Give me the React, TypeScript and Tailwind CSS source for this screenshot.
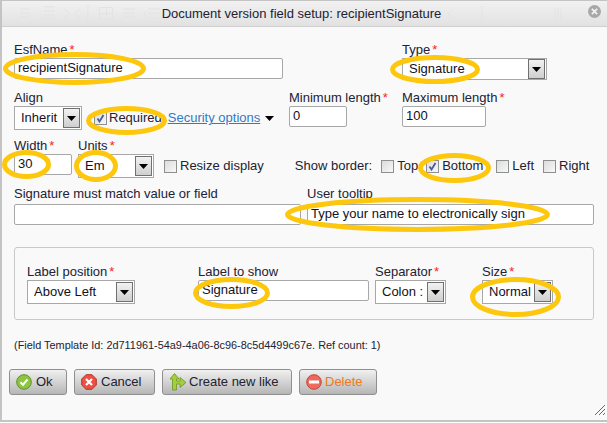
import React from "react";

const font = { fontFamily: '"Liberation Sans", Arial, sans-serif' };

function Star() {
  return <span className="text-[#ff2020] ml-[2px]">*</span>;
}

function Label({ children, req }: { children: React.ReactNode; req?: boolean }) {
  return (
    <div className="h-[14px] leading-[16px] text-[13px] text-[#222233] whitespace-nowrap">
      {children}
      {req && <Star />}
    </div>
  );
}

function Input({ w, value }: { w: number; value?: string }) {
  return (
    <div
      className="h-[21px] bg-white border border-[#a8a8a8] rounded-[2px] pl-[3px] text-[13px] leading-[18px] text-[#111122] whitespace-nowrap overflow-hidden"
      style={{ width: w }}
    >
      {value}
    </div>
  );
}

function Select({ w, value }: { w: number; value: string }) {
  return (
    <div
      className="h-[24px] bg-white border border-[#a8a8a8] flex items-center justify-between pl-[6px] pr-[1px] text-[13px] text-[#111122] whitespace-nowrap"
      style={{ width: w }}
    >
      <span>{value}</span>
      <span className="w-[17px] h-[20px] border border-[#707070] bg-gradient-to-b from-[#f2f2f2] to-[#cfcfcf] flex items-center justify-center">
        <svg width="9" height="5" viewBox="0 0 9 5">
          <path d="M0 0h9L4.500 5z" fill="#000" />
        </svg>
      </span>
    </div>
  );
}

function Check({ on }: { on?: boolean }) {
  return (
    <span className="w-[13px] h-[13px] border border-[#8e8f8f] bg-gradient-to-br from-[#dcdcdc] to-[#f8f8f8] flex items-center justify-center shrink-0">
      {on && (
        <svg width="9" height="9" viewBox="0 0 9 9">
          <path d="M1.500 4.500 3.500 7.500 7.500 1" stroke="#4a5a9a" strokeWidth="1.800" fill="none" />
        </svg>
      )}
    </span>
  );
}

function CheckLabel({ on, text, className }: { on?: boolean; text: string; className?: string }) {
  return (
    <span className={"flex items-center gap-[3px] text-[13px] text-[#222233] whitespace-nowrap " + (className ?? "")}>
      <Check on={on} />
      {text}
    </span>
  );
}

function Button({
  w,
  icon,
  text,
  className,
  gap = 4,
}: {
  w: number;
  icon: React.ReactNode;
  text: string;
  className?: string;
  gap?: number;
}) {
  return (
    <div
      className={
        "h-[26px] border border-[#8f8f8f] rounded-[3px] bg-gradient-to-b from-[#f1f1f1] to-[#b6b6b6] flex items-center pl-[6px] text-[13px] whitespace-nowrap " +
        (className ?? "text-[#222233]")
      }
      style={{ width: w, gap }}
    >
      {icon}
      {text}
    </div>
  );
}

const OkIcon = (
  <svg width="16" height="16" viewBox="0 0 16 16">
    <circle cx="8" cy="8" r="7.300" fill="#8cc63f" stroke="#5d8f2a" />
    <path d="M4.500 8.200 7 10.700 11.500 5.500" stroke="#fff" strokeWidth="2" fill="none" />
  </svg>
);
const CancelIcon = (
  <svg width="16" height="16" viewBox="0 0 16 16">
    <path d="M5 .7h6L15.300 5v6L11 15.300H5L.7 11V5z" fill="#ec4f43" stroke="#b5352c" />
    <path d="M5 5l6 6M11 5l-6 6" stroke="#fff" strokeWidth="2.200" />
  </svg>
);
const CreateIcon = (
  <svg width="18" height="18" viewBox="0 0 18 18">
    <path
      d="M5.500.5 10 6H7.500v2H11V4.500l6 5-6 5V11H7.500v6h-4V6H1z"
      fill="#a4cf3c"
      stroke="#6c9420"
      strokeWidth="0.800"
    />
  </svg>
);
const DeleteIcon = (
  <svg width="16" height="16" viewBox="0 0 16 16">
    <circle cx="8" cy="8" r="7.300" fill="#ee6a5c" stroke="#c0453a" />
    <rect x="3" y="6.500" width="10" height="3" fill="#fff" />
  </svg>
);

function Ring({ x0, x1, y0, y1 }: { x0: number; x1: number; y0: number; y1: number }) {
  return (
    <ellipse
      cx={(x0 + x1) / 2}
      cy={(y0 + y1) / 2}
      rx={(x1 - x0 - 5) / 2}
      ry={(y1 - y0 - 5) / 2}
      fill="none"
      stroke="#fdc70d"
      strokeWidth="5"
    />
  );
}

export default function App() {
  return (
    <div className="relative w-[607px] h-[423px] bg-white overflow-hidden" style={font}>
      <div className="h-[422px] border-l-2 border-t border-b-2 border-[#c4c4c4] bg-[#f9f9f9] flex flex-col">
        {/* title bar */}
        <div className="relative h-[26px] shrink-0 bg-gradient-to-b from-[#f1f1f1] to-[#e2e2e2] flex items-center justify-center pr-[6px] text-[13px] text-[#222233] border-b border-[#d0d0d0]">
          {/* faint toolbar showing through the translucent title bar */}
          <svg className="absolute left-0 top-0" width="605" height="25" fill="none" stroke="#e3e3e3">
            <path d="M18 8h10M18 12h10M18 16h10M42 6h11M42 10h11M42 14h11M42 18h11M62 8l6 5-6 5M78 8l-6 5 6 5" />
            <path d="M86 4v18" />
            <path d="M97.500 6.500h13v12h-13zM97.500 12.500h13M104.500 6.500v12" />
            <path d="M121 8h12M121 12h12M121 16h12" />
            <path d="M146 8h12M146 12h12M146 17h12M145 10l-3 3 3 3" />
            <path d="M450 9l-4 4 4 4M480 5v17" />
            <path d="M553 7v12M556 7v12M559 7v12" />
          </svg>
          <span className="relative">Document version field setup: recipientSignature</span>
          <span className="absolute right-[6px] top-[4px] w-[13px] h-[13px] rounded-full bg-[#a8a8a8] flex items-center justify-center">
            <svg width="7" height="7" viewBox="0 0 8 8">
              <path d="M1 1l6 6M7 1L1 7" stroke="#f2f2f2" strokeWidth="2" />
            </svg>
          </span>
        </div>

        <div className="flex-1 pl-[12px] flex flex-col pt-[15px] relative">
          {/* row 1 */}
          <div className="flex h-[38px] gap-[119px]">
            <div className="flex flex-col gap-[2px]">
              <Label req>EsfName</Label>
              <Input w={269} value="recipientSignature" />
            </div>
            <div className="flex flex-col gap-[2px]">
              <Label req>Type</Label>
              <Select w={145} value="Signature" />
            </div>
          </div>

          {/* row 2 */}
          <div className="flex mt-[10px] h-[40px]">
            <div className="flex flex-col gap-[2px] w-[275px]">
              <Label>Align</Label>
              <div className="flex items-center">
                <Select w={68} value="Inherit" />
                <span className="ml-[12px] flex items-center gap-[2px] text-[13px] text-[#222233]">
                  <Check on />
                  Required
                </span>
                <span className="ml-[6px] text-[13px] text-[#2f7cc6] underline">Security options</span>
                <svg className="ml-[5px]" width="9" height="5" viewBox="0 0 9 5">
                  <path d="M0 0h9L4.500 5z" fill="#000" />
                </svg>
              </div>
            </div>
            <div className="flex flex-col gap-[2px] w-[113px]">
              <Label req>Minimum length</Label>
              <Input w={58} value="0" />
            </div>
            <div className="flex flex-col gap-[2px]">
              <Label req>Maximum length</Label>
              <Input w={84} value="100" />
            </div>
          </div>

          {/* row 3 */}
          <div className="flex mt-[8px] h-[40px]">
            <div className="flex flex-col gap-[2px] w-[64px]">
              <Label req>Width</Label>
              <Input w={58} value="30" />
            </div>
            <div className="flex flex-col gap-[2px] w-[86px]">
              <Label req>Units</Label>
              <Select w={76} value="Em" />
            </div>
            <div className="flex items-center h-[24px] mt-[16px] text-[13px] text-[#222233]">
              <CheckLabel text="Resize display" />
              <span className="ml-[31px] whitespace-nowrap">Show border:</span>
              <CheckLabel text="Top" className="ml-[9px]" />
              <CheckLabel on text="Bottom" className="ml-[8px]" />
              <CheckLabel text="Left" className="ml-[13px]" />
              <CheckLabel text="Right" className="ml-[9px]" />
            </div>
          </div>

          {/* row 4 */}
          <div className="flex mt-[8px] h-[40px] gap-[6px]">
            <div className="flex flex-col gap-[4px]">
              <Label>Signature must match value or field</Label>
              <Input w={287} />
            </div>
            <div className="flex flex-col gap-[4px]">
              <Label>User tooltip</Label>
              <Input w={287} value="Type your name to electronically sign" />
            </div>
          </div>

          {/* fieldset */}
          <div className="mt-[21px] w-[580px] h-[73px] border border-[#c8c8c8] rounded-[3px] flex pl-[12px] pt-[16px]">
            <div className="flex flex-col gap-[2px] w-[171px]">
              <Label req>Label position</Label>
              <Select w={108} value="Above Left" />
            </div>
            <div className="flex flex-col gap-[2px] w-[177px]">
              <Label>Label to show</Label>
              <Input w={171} value="Signature" />
            </div>
            <div className="flex flex-col gap-[2px] w-[107px]">
              <Label req>Separator</Label>
              <Select w={71} value="Colon :" />
            </div>
            <div className="flex flex-col gap-[2px]">
              <Label req>Size</Label>
              <Select w={71} value="Normal" />
            </div>
          </div>

          <div className="mt-[18px] h-[14px] leading-[14px] text-[10.900px] text-[#222233] whitespace-nowrap">
            (Field Template Id: 2d711961-54a9-4a06-8c96-8c5d4499c67e. Ref count: 1)
          </div>

          <div className="mt-[17px] -ml-[5px] flex gap-[7px]">
            <Button w={58} icon={OkIcon} text="Ok" />
            <Button w={81} icon={CancelIcon} text="Cancel" />
            <Button w={130} icon={CreateIcon} text="Create new like" gap={2} />
            <Button w={78} icon={DeleteIcon} text="Delete" gap={3} className="text-[#f07820]" />
          </div>

          <svg className="absolute right-[2px] bottom-[5px]" width="10" height="10" viewBox="0 0 10 10">
            <path d="M0 10 10 0M4 10l6-6M8 10l2-2" stroke="#666" strokeWidth="1" />
          </svg>
        </div>
      </div>

      {/* hand-drawn highlight rings */}
      <svg className="absolute left-0 top-0 pointer-events-none" width="607" height="423">
        <Ring x0={3} x1={146} y0={52} y1={85} />
        <Ring x0={390} x1={480} y0={55} y1={84} />
        <Ring x0={86} x1={167} y0={106} y1={135} />
        <Ring x0={2} x1={51} y0={150} y1={179} />
        <Ring x0={74} x1={118} y0={150} y1={182} />
        <Ring x0={418} x1={491} y0={153} y1={183} />
        <Ring x0={285} x1={550} y0={197} y1={232} />
        <Ring x0={193} x1={270} y0={277} y1={309} />
        <Ring x0={470} x1={561} y0={277} y1={317} />
      </svg>
    </div>
  );
}
